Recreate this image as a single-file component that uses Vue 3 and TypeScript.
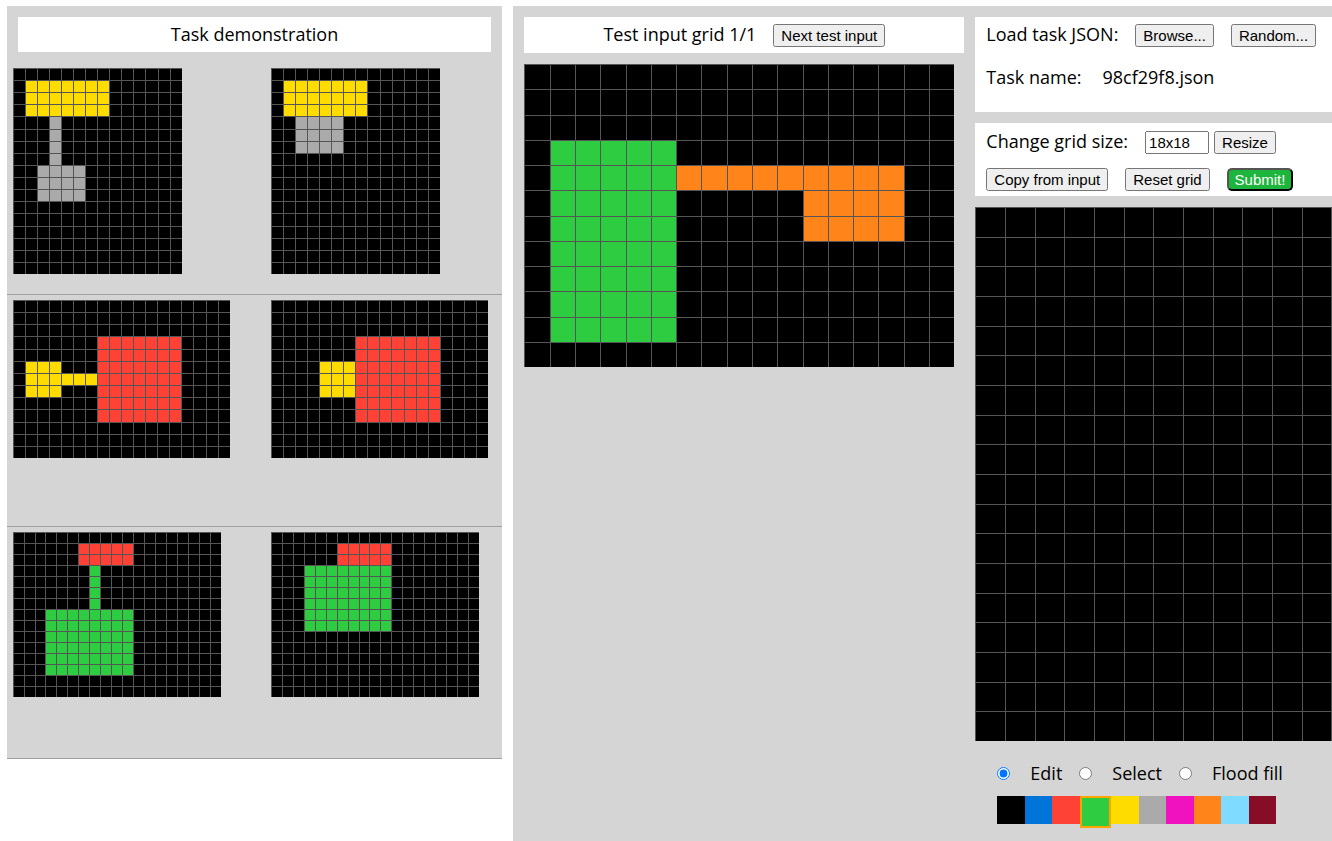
<script setup lang="ts">
import { computed, ref } from 'vue'

type Block = { color: number; x: number; y: number; w: number; h: number }
type Grid = { cols: number; rows: number; size: string; blocks: Block[] }

const palette = [
  { name: 'Black', hex: '#000000' },
  { name: 'Blue', hex: '#0074d9' },
  { name: 'Red', hex: '#ff4136' },
  { name: 'Green', hex: '#2ecc40' },
  { name: 'Yellow', hex: '#ffdc00' },
  { name: 'Grey', hex: '#aaaaaa' },
  { name: 'Fuchsia', hex: '#f012be' },
  { name: 'Orange', hex: '#ff851b' },
  { name: 'Light blue', hex: '#7fdbff' },
  { name: 'Maroon', hex: '#870c25' },
]

const block = (color: number, x: number, y: number, w: number, h: number): Block => ({ color, x, y, w, h })

function cellsOf(grid: Grid): number[] {
  const cells = new Array<number>(grid.cols * grid.rows).fill(0)
  for (const b of grid.blocks) {
    for (let y = b.y; y < b.y + b.h; y++) {
      for (let x = b.x; x < b.x + b.w; x++) cells[y * grid.cols + x] = b.color
    }
  }
  return cells
}

const tall = { cols: 14, rows: 17, size: 'tall' }
const wide = { cols: 18, rows: 13, size: 'wide' }
const fine = { cols: 19, rows: 15, size: 'fine' }

const pairs: Grid[][] = [
  [
    { ...tall, blocks: [block(4, 1, 1, 7, 3), block(5, 3, 4, 1, 4), block(5, 2, 8, 4, 3)] },
    { ...tall, blocks: [block(4, 1, 1, 7, 3), block(5, 2, 4, 4, 3)] },
  ],
  [
    { ...wide, blocks: [block(4, 1, 5, 3, 3), block(4, 4, 6, 3, 1), block(2, 7, 3, 7, 7)] },
    { ...wide, blocks: [block(4, 4, 5, 3, 3), block(2, 7, 3, 7, 7)] },
  ],
  [
    { ...fine, blocks: [block(2, 6, 1, 5, 2), block(3, 7, 3, 1, 4), block(3, 3, 7, 8, 6)] },
    { ...fine, blocks: [block(2, 6, 1, 5, 2), block(3, 3, 3, 8, 6)] },
  ],
]

const testInput: Grid = {
  cols: 17,
  rows: 12,
  size: 'input',
  blocks: [block(3, 1, 3, 5, 8), block(7, 6, 4, 9, 1), block(7, 11, 5, 4, 2)],
}

const sizeText = ref('18x18')
const output = ref({ cols: 18, rows: 18, cells: new Array<number>(18 * 18).fill(0) })
const tool = ref('edit')
const tools = [
  { id: 'edit', label: 'Edit' },
  { id: 'select', label: 'Select' },
  { id: 'floodfill', label: 'Flood fill' },
]
const symbol = ref(3)

const outputTracks = computed(() => tracks(output.value.cols, output.value.rows))

function tracks(cols: number, rows: number) {
  return {
    gridTemplateColumns: `repeat(${cols}, minmax(0, 1fr))`,
    gridTemplateRows: `repeat(${rows}, minmax(0, 1fr))`,
  }
}

function resize() {
  const match = /^(\d+)x(\d+)$/.exec(sizeText.value.trim())
  if (!match) return
  const rows = Math.min(30, Math.max(1, Number(match[1])))
  const cols = Math.min(30, Math.max(1, Number(match[2])))
  output.value = { cols, rows, cells: new Array<number>(cols * rows).fill(0) }
}

function reset() {
  output.value.cells = output.value.cells.map(() => 0)
}

function copyInput() {
  output.value = { cols: testInput.cols, rows: testInput.rows, cells: cellsOf(testInput) }
  sizeText.value = `${testInput.rows}x${testInput.cols}`
}

function paint(index: number) {
  if (tool.value === 'edit') output.value.cells[index] = symbol.value
}
</script>

<template>
  <div class="page">
    <section class="demo">
      <h1 class="bar">Task demonstration</h1>
      <div v-for="(pair, p) in pairs" :key="p" class="pair">
        <div v-for="(grid, g) in pair" :key="g" class="grid" :class="grid.size" :style="tracks(grid.cols, grid.rows)">
          <div v-for="(c, i) in cellsOf(grid)" :key="i" class="cell" :style="{ backgroundColor: palette[c].hex }"></div>
        </div>
      </div>
    </section>

    <main class="workspace">
      <section class="test">
        <div class="bar test-bar">
          <span>Test input grid 1/1</span>
          <button type="button">Next test input</button>
        </div>
        <div class="grid input" :style="tracks(testInput.cols, testInput.rows)">
          <div v-for="(c, i) in cellsOf(testInput)" :key="i" class="cell" :style="{ backgroundColor: palette[c].hex }"></div>
        </div>
      </section>

      <section class="editor">
        <div class="box load">
          <div class="line">
            <span>Load task JSON:</span>
            <button type="button">Browse...</button>
            <button type="button">Random...</button>
          </div>
          <div class="line name">
            <span>Task name:</span>
            <span>98cf29f8.json</span>
          </div>
        </div>
        <div class="box controls">
          <div class="line">
            <label for="grid-size">Change grid size:</label>
            <div class="size">
              <input id="grid-size" v-model="sizeText" class="size-field" type="text" />
              <button type="button" @click="resize">Resize</button>
            </div>
          </div>
          <div class="line actions">
            <button type="button" @click="copyInput">Copy from input</button>
            <button type="button" @click="reset">Reset grid</button>
            <button type="button" class="submit">Submit!</button>
          </div>
        </div>
        <div class="grid output" :style="outputTracks">
          <div
            v-for="(c, i) in output.cells"
            :key="i"
            class="cell"
            :style="{ backgroundColor: palette[c].hex }"
            @click="paint(i)"
          ></div>
        </div>
        <div class="toolbar">
          <div v-for="t in tools" :key="t.id" class="tool">
            <input :id="t.id" v-model="tool" type="radio" name="tool" :value="t.id" />
            <label :for="t.id">{{ t.label }}</label>
          </div>
        </div>
        <div class="palette">
          <button
            v-for="(entry, i) in palette"
            :key="i"
            type="button"
            class="swatch"
            :class="{ selected: i === symbol }"
            :style="{ backgroundColor: entry.hex }"
            :aria-label="entry.name"
            :aria-pressed="i === symbol"
            @click="symbol = i"
          ></button>
        </div>
      </section>
    </main>
  </div>
</template>

<style>
body {
  margin: 0;
  background: #fff;
}
</style>

<style scoped>
.page {
  box-sizing: border-box;
  display: flex;
  align-items: stretch;
  gap: 11px;
  min-height: 100vh;
  padding: 6px 0 0 0.5%;
  overflow: hidden;
  color: #000;
  font: 18px/25px 'Open Sans', 'Noto Sans', sans-serif;
}

.demo {
  flex: none;
  align-self: flex-start;
  width: 37.4%;
  background: #d5d5d5;
}

.bar {
  margin: 11px;
  padding: 5px;
  background: #fff;
  font-size: 18px;
  font-weight: 400;
  text-align: center;
}

.pair {
  box-sizing: border-box;
  display: grid;
  grid-template-columns: 53.4% 1fr;
  align-items: start;
  min-height: 232px;
  padding: 5px 6px;
  border-bottom: 1px solid #a0a0a0;
}

.grid {
  display: grid;
}

.tall {
  width: 169px;
  height: 206px;
}

.wide {
  width: 217px;
  height: 158px;
}

.fine {
  width: 208px;
  height: 165px;
}

.input {
  width: 430px;
  height: 303px;
}

.output {
  width: 534px;
  height: 534px;
}

.cell {
  border-top: 1px solid #555;
  border-left: 1px solid #555;
}

.workspace {
  display: flex;
  flex: 1 0 auto;
  align-items: flex-start;
  gap: 11px;
  padding: 11px;
  background: #d5d5d5;
}

.test {
  flex: none;
  width: 440px;
}

.test-bar {
  display: flex;
  align-items: baseline;
  justify-content: center;
  gap: 17px;
  margin: 0 0 11px;
  padding-bottom: 6px;
}

button,
.size-field {
  margin: 0;
  font-family: 'Liberation Sans', Arial, sans-serif;
  font-size: 15px;
}

.editor {
  display: flex;
  flex: none;
  flex-direction: column;
}

.box {
  box-sizing: border-box;
  margin-bottom: 11px;
  padding: 5px 11px;
  background: #fff;
}

.load {
  min-height: 95px;
}

.controls {
  padding-top: 6px;
}

.line {
  display: flex;
  align-items: baseline;
  gap: 17px;
}

.name {
  gap: 21px;
  margin-top: 18px;
}

.size {
  display: flex;
  align-items: baseline;
  gap: 5px;
}

.size-field {
  box-sizing: border-box;
  width: 64px;
}

.actions {
  margin-top: 14px;
}

.submit {
  border-radius: 5px;
  background: #1db53c;
  color: #fff;
}

.toolbar {
  display: flex;
  gap: 17px;
  padding: 20px 22px 0;
}

.tool {
  display: flex;
  align-items: center;
  gap: 20px;
}

.tool input {
  margin: 0;
}

.palette {
  display: flex;
  align-items: flex-start;
  width: 279px;
  margin: 10px 22px 0;
}

.swatch {
  box-sizing: border-box;
  flex: 1;
  height: 28px;
  padding: 0;
  border: 0;
  border-radius: 0;
}

.selected {
  flex: 0 0 31px;
  height: 32px;
  border: 2px solid #ffa500;
}
</style>
